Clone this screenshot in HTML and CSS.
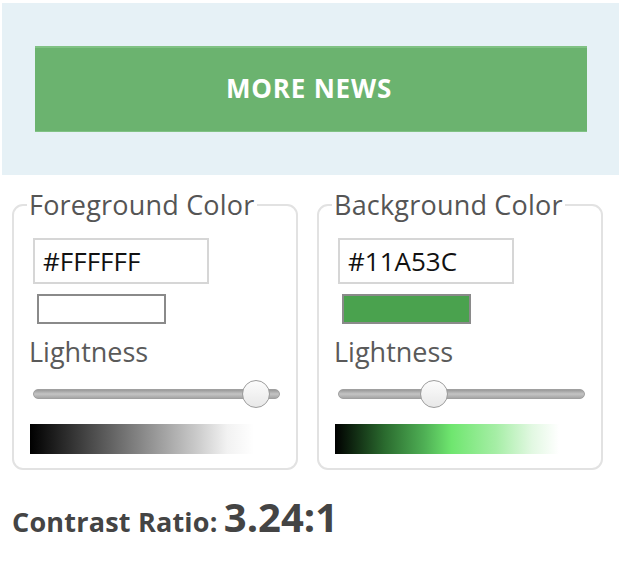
FILE: index.html
```html
<!DOCTYPE html>
<html>
<head>
<meta charset="utf-8">
<link rel="stylesheet" href="styles.css">
</head>
<body>
<div class="preview">
  <div class="news-btn">MORE NEWS</div>
</div>
<div class="pickers">
  <fieldset class="picker">
    <legend>Foreground Color</legend>
    <div class="hex">#FFFFFF</div>
    <div class="swatch swatch-fg"></div>
    <div class="label">Lightness</div>
    <div class="slider"><div class="track"></div><div class="thumb" style="left: 209px"></div></div>
    <div class="grad grad-fg"></div>
  </fieldset>
  <fieldset class="picker">
    <legend>Background Color</legend>
    <div class="hex">#11A53C</div>
    <div class="swatch swatch-bg"></div>
    <div class="label">Lightness</div>
    <div class="slider"><div class="track"></div><div class="thumb" style="left: 82px"></div></div>
    <div class="grad grad-bg"></div>
  </fieldset>
</div>
<div class="ratio"><span class="ratio-label">Contrast Ratio:</span> <span class="ratio-value">3.24:1</span></div>
</body>
</html>
```
FILE: styles.css
```css
html, body {
  margin: 0;
  padding: 0;
  background: #fff;
  font-family: "Open Sans", "Liberation Sans", sans-serif;
}
.preview {
  margin: 3px 3px 0 2px;
  height: 172px;
  background: #e6f1f6;
  padding: 43px 32px 0 33px;
  box-sizing: border-box;
}
.news-btn {
  height: 86px;
  background: #6bb36f;
  border-top: 2px solid #80c284;
  border-bottom: 1px solid #80c284;
  box-sizing: border-box;
  color: #fff;
  font-weight: 700;
  font-size: 26px;
  letter-spacing: 0.8px;
  padding: 0 4px 4px 0;
  display: flex;
  align-items: center;
  justify-content: center;
}
.pickers {
  display: flex;
  gap: 19px;
  padding: 15px 0 0 12px;
}
.picker {
  margin: 0;
  width: 286px;
  height: 280px;
  box-sizing: border-box;
  border: 2px solid #e2e2e2;
  border-radius: 11px;
  padding: 18px 0 0 19px;
  position: relative;
}
.picker legend {
  font-size: 27px;
  color: #555;
  padding: 0 2px;
  margin-left: -6px;
  line-height: 30px;
  letter-spacing: 0.2px;
}
.hex {
  width: 176px;
  height: 46px;
  box-sizing: border-box;
  border: 2px solid #d6d6d6;
  font-size: 26px;
  color: #111;
  padding-left: 8px;
  line-height: 42px;
}
.swatch {
  width: 129px;
  height: 30px;
  box-sizing: border-box;
  border: 2px solid #8a8a8a;
  margin: 10px 0 0 4px;
}
.swatch-fg { background: #fff; }
.swatch-bg { background: #4aa24e; }
.label {
  font-size: 27px;
  color: #5a5a5a;
  margin: 12px 0 0 -4px;
  line-height: 32px;
}
.slider {
  position: relative;
  width: 247px;
  height: 30px;
  margin-top: 12px;
}
.track {
  position: absolute;
  left: 0;
  right: 0;
  top: 9px;
  height: 10px;
  border-radius: 5px;
  background: linear-gradient(#9a9a9a, #c4c4c4 50%, #a6a6a6);
  border: 1px solid #a0a0a0;
  box-sizing: border-box;
}
.thumb {
  position: absolute;
  top: 0;
  width: 28px;
  height: 28px;
  border-radius: 50%;
  background: linear-gradient(#fcfcfc, #e8e8e8);
  border: 1.5px solid #9c9c9c;
  box-sizing: border-box;
}
.grad {
  width: 224px;
  height: 30px;
  margin: 14px 0 0 -3px;
}
.grad-fg {
  background: linear-gradient(to right, #000 0%, #444 25%, #888 50%, #ccc 75%, #f2f2f2 88%, #fff 100%);
}
.grad-bg {
  background: linear-gradient(to right, #000 0%, #2a6a2e 22%, #4fb055 40%, #6fe66f 52%, #a6eea6 72%, #e2f8e2 88%, #fff 100%);
}
.ratio {
  padding: 19px 0 0 12px;
  color: #444;
}
.ratio-label {
  font-weight: 700;
  font-size: 27px;
  letter-spacing: 0.2px;
}
.ratio-value {
  font-weight: 700;
  font-size: 40px;
  margin-left: 2px;
}
```
